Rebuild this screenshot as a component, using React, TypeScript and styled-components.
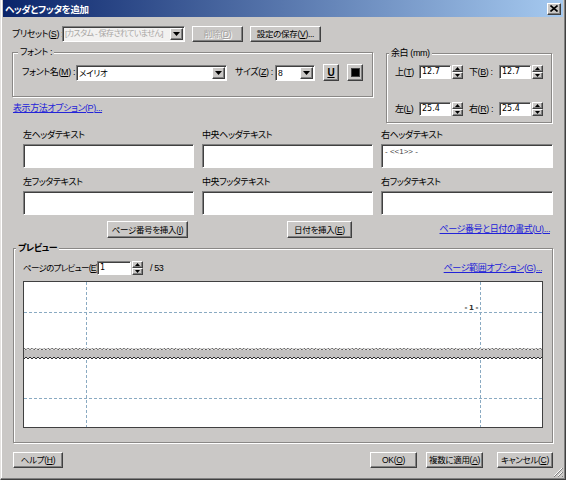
import React from 'react';
import styled, { createGlobalStyle, css } from 'styled-components';

const BG = '#cac8c6';

const GlobalStyle = createGlobalStyle`
  html, body {
    margin: 0;
    padding: 0;
    background: ${BG};
  }
  body {
    font-family: "Liberation Sans", "Noto Sans CJK JP", sans-serif;
    font-size: 9px;
    font-feature-settings: "palt";
    letter-spacing: -0.4px;
    color: #000;
  }
  * { box-sizing: border-box; }
`;

const raised = css`
  background: ${BG};
  border: 1px solid;
  border-color: #fff #404040 #404040 #fff;
  box-shadow: inset -1px -1px 0 #808080;
`;

const sunken = css`
  background: #fff;
  border: 1px solid;
  border-color: #808080 #fff #fff #808080;
  box-shadow: inset 1px 1px 0 #404040;
`;

const Window = styled.div`
  position: relative;
  width: 566px;
  height: 480px;
  overflow: hidden;
  background: ${BG};
  border: 1px solid;
  border-top: none;
  border-color: #e4e2e0 #404040 #404040 #e4e2e0;
  padding: 0 2px 2px 2px;
  box-shadow: inset -1px -1px 0 #808080, inset 1px 0 0 #fff;
`;

const TitleBar = styled.div`
  height: 17px;
  display: flex;
  align-items: center;
  justify-content: space-between;
  padding: 0 2px 0 2px;
  background: linear-gradient(to right, #0a246a, #a6caf0);
  color: #fff;
  font-weight: bold;
  font-size: 9.5px;
`;

const CloseButton = styled.span`
  ${raised};
  width: 14px;
  height: 12px;
  display: flex;
  align-items: center;
  justify-content: center;
`;

const Body = styled.div`
  display: flex;
  flex-direction: column;
  align-items: flex-start;
  padding: 0 11px 0 9px;
`;

const TopArea = styled.div`
  display: flex;
  align-items: flex-start;
  margin-top: 9px;
  height: 97px;
`;

const LeftCol = styled.div`
  width: 361px;
  display: flex;
  flex-direction: column;
`;

const Row = styled.div<{ $h: number; $mt?: number; $pl?: number }>`
  display: flex;
  align-items: center;
  height: ${p => p.$h}px;
  margin-top: ${p => p.$mt ?? 0}px;
  padding-left: ${p => p.$pl ?? 0}px;
  white-space: nowrap;
`;

const Label = styled.span<{ $w?: number; $ml?: number; $tight?: boolean }>`
  display: inline-block;
  flex: none;
  width: ${p => (p.$w ? `${p.$w}px` : 'auto')};
  margin-left: ${p => p.$ml ?? 0}px;
  white-space: nowrap;
  line-height: 13px;
  font-size: ${p => (p.$tight ? 8.5 : 9)}px;
  letter-spacing: ${p => (p.$tight ? -0.7 : -0.4)}px;
`;

const ComboBox = styled.div<{ $w: number; $ml?: number; $disabled?: boolean }>`
  ${sunken};
  flex: none;
  display: flex;
  align-items: center;
  width: ${p => p.$w}px;
  height: 16px;
  padding: 1px 1px 1px 2px;
  margin-left: ${p => p.$ml ?? 0}px;
  background: ${p => (p.$disabled ? '#f2f1f0' : '#fff')};
`;

const ComboText = styled.span<{ $disabled?: boolean }>`
  flex: 1;
  overflow: hidden;
  white-space: nowrap;
  font-size: ${p => (p.$disabled ? 8 : 8.5)}px;
  letter-spacing: ${p => (p.$disabled ? -0.6 : -0.3)}px;
  line-height: 12px;
  color: ${p => (p.$disabled ? '#a8a6a4' : '#000')};
`;

const ComboArrow = styled.span`
  ${raised};
  flex: none;
  width: 13px;
  height: 12px;
  display: flex;
  align-items: center;
  justify-content: center;
`;

const PushButton = styled.button<{ $w: number; $h?: number; $ml?: number }>`
  ${raised};
  flex: none;
  width: ${p => p.$w}px;
  height: ${p => p.$h ?? 16}px;
  margin-left: ${p => p.$ml ?? 0}px;
  padding: 0;
  font: inherit;
  font-size: 8.5px;
  line-height: 12px;
  letter-spacing: -0.3px;
  color: #000;
  white-space: nowrap;
  &:disabled {
    color: #a4a2a0;
    text-shadow: 1px 1px 0 #fff;
  }
`;

const ToolButton = styled.span<{ $ml?: number }>`
  ${raised};
  flex: none;
  width: 16px;
  height: 17px;
  margin-left: ${p => p.$ml ?? 0}px;
  display: flex;
  align-items: center;
  justify-content: center;
  font-weight: bold;
  font-size: 10px;
  letter-spacing: 0;
  text-decoration: underline;
`;

const Swatch = styled.span`
  width: 9px;
  height: 9px;
  background: #000;
  border: 1px solid #404040;
`;

const Group = styled.div<{ $w: number; $h: number; $mt?: number; $ml?: number; $pt: number; $pl: number; $pr?: number }>`
  position: relative;
  flex: none;
  width: ${p => p.$w}px;
  height: ${p => p.$h}px;
  margin-top: ${p => p.$mt ?? 0}px;
  margin-left: ${p => p.$ml ?? 0}px;
  padding: ${p => `${p.$pt}px ${p.$pr ?? 0}px 0 ${p.$pl}px`};
  border: 1px solid #8a8886;
  box-shadow: inset 1px 1px 0 #fff, 1px 1px 0 #fff;
`;

const Legend = styled.span<{ $left: number; $bold?: boolean }>`
  position: absolute;
  top: -7px;
  left: ${p => p.$left}px;
  padding: 0 2px;
  line-height: 13px;
  background: ${BG};
  font-weight: ${p => (p.$bold ? 'bold' : 'normal')};
  white-space: nowrap;
`;

const NumberInput = styled.div<{ $w: number }>`
  ${sunken};
  flex: none;
  width: ${p => p.$w}px;
  height: 14px;
  padding-left: 2px;
  font-family: "DejaVu Sans", sans-serif;
  font-size: 8px;
  letter-spacing: 0;
  line-height: 12px;
`;

const Spin = styled.div`
  flex: none;
  width: 11px;
  height: 14px;
  margin-left: 1px;
  display: flex;
  flex-direction: column;
`;

const SpinHalf = styled.span`
  ${raised};
  flex: 1;
  display: flex;
  align-items: center;
  justify-content: center;
`;

const LinkText = styled.span<{ $mt?: number; $mr?: number }>`
  color: #2323d8;
  text-decoration: underline;
  white-space: nowrap;
  line-height: 13px;
  margin-top: ${p => p.$mt ?? 0}px;
  margin-left: auto;
  margin-right: ${p => p.$mr ?? 0}px;
`;

const TopLink = styled(LinkText)`
  margin-left: 1px;
  align-self: flex-start;
`;

const TextGrid = styled.div`
  display: grid;
  grid-template-columns: 171px 171px 172px;
  column-gap: 8px;
  margin: 6px 0 0 11px;
`;

const FieldLabel = styled.div<{ $mt?: number }>`
  height: 13px;
  line-height: 13px;
  margin-top: ${p => p.$mt ?? 0}px;
  white-space: nowrap;
`;

const TextField = styled.div`
  ${sunken};
  height: 24px;
  margin-top: 2px;
  padding: 2px 3px;
  font-size: 8px;
  letter-spacing: 0;
  line-height: 10px;
  color: #444;
  white-space: pre;
`;

const InsertRow = styled.div`
  display: flex;
  align-items: center;
  width: 540px;
  height: 17px;
  margin-top: 6px;
`;

const PreviewFrame = styled.div`
  width: 520px;
  height: 147px;
  margin-top: 6px;
  border: 1px solid #404040;
  background: #c2c0bf;
`;

const ButtonBar = styled.div`
  display: flex;
  align-items: center;
  width: 541px;
  margin: 9px 0 0 1px;
`;

const Grip = styled.svg`
  position: absolute;
  right: 2px;
  bottom: 2px;
`;

const DownArrow = () => (
  <svg width="7" height="4" viewBox="0 0 7 4"><path d="M0 0h7L3.5 4z" fill="#000" /></svg>
);

const SpinButtons = () => (
  <Spin>
    <SpinHalf><svg width="5" height="3" viewBox="0 0 5 3"><path d="M0 3h5L2.5 0z" fill="#000" /></svg></SpinHalf>
    <SpinHalf><svg width="5" height="3" viewBox="0 0 5 3"><path d="M0 0h5L2.5 3z" fill="#000" /></svg></SpinHalf>
  </Spin>
);

const zig = (from: number, to: number, a: number, b: number) => {
  const pts: string[] = [];
  const step = from < to ? 2 : -2;
  let i = 0;
  for (let x = from; step > 0 ? x <= to : x >= to; x += step) {
    pts.push(`${x},${i % 2 ? b : a}`);
    i++;
  }
  return pts.join(' ');
};

const PreviewDrawing = () => {
  const w = 518;
  const dash = { stroke: '#8aaac2', strokeWidth: 1, strokeDasharray: '3 2' };
  return (
    <svg width={w} height={145} viewBox={`0 0 ${w} 145`} style={{ display: 'block' }}>
      <polygon points={`0,0 ${w},0 ${zig(w, 0, 66, 68)}`} fill="#fff" />
      <polyline points={zig(0, w, 66, 68)} fill="none" stroke="#1a1a1a" strokeWidth="0.9" strokeDasharray="1 1" />
      <polygon points={`${zig(0, w, 77, 75)} ${w},145 0,145`} fill="#fff" />
      <polyline points={zig(0, w, 77, 75)} fill="none" stroke="#1a1a1a" strokeWidth="0.9" />
      <line x1="62.5" y1="0" x2="62.5" y2="66" {...dash} />
      <line x1="456.5" y1="0" x2="456.5" y2="66" {...dash} />
      <line x1="0" y1="30.5" x2={w} y2="30.5" {...dash} />
      <line x1="62.5" y1="78" x2="62.5" y2="145" {...dash} />
      <line x1="456.5" y1="78" x2="456.5" y2="145" {...dash} />
      <line x1="0" y1="116.5" x2={w} y2="116.5" {...dash} />
      <text x="454" y="28" textAnchor="end" fontSize="7" fontWeight="bold" fill="#333" fontFamily="DejaVu Sans, sans-serif">- 1 -</text>
    </svg>
  );
};

export default function App() {
  return (
    <>
      <GlobalStyle />
      <Window>
        <TitleBar>
          <span>ヘッダとフッタを追加</span>
          <CloseButton>
            <svg width="8" height="7" viewBox="0 0 8 7">
              <path d="M0.5 0.5L7.5 6.5M7.5 0.5L0.5 6.5" stroke="#000" strokeWidth="1.6" />
            </svg>
          </CloseButton>
        </TitleBar>
        <Body>
          <TopArea>
            <LeftCol>
              <Row $h={16}>
                <Label $w={50}>プリセット(<u>S</u>) :</Label>
                <ComboBox $w={123} $disabled>
                  <ComboText $disabled>[カスタム - 保存されていません]</ComboText>
                  <ComboArrow><DownArrow /></ComboArrow>
                </ComboBox>
                <PushButton $w={51} $ml={7} disabled>削除(<u>D</u>)</PushButton>
                <PushButton $w={71} $ml={7}>設定の保存(<u>V</u>)...</PushButton>
              </Row>
              <Group $w={361} $h={45} $mt={10} $pt={11} $pl={9}>
                <Legend $left={5}>フォント :</Legend>
                <Row $h={17}>
                  <Label $w={54}>フォント名(<u>M</u>) :</Label>
                  <ComboBox $w={151}>
                    <ComboText>メイリオ</ComboText>
                    <ComboArrow><DownArrow /></ComboArrow>
                  </ComboBox>
                  <Label $w={40} $ml={8}>サイズ(<u>Z</u>) :</Label>
                  <ComboBox $w={40}>
                    <ComboText>8</ComboText>
                    <ComboArrow><DownArrow /></ComboArrow>
                  </ComboBox>
                  <ToolButton $ml={8}>U</ToolButton>
                  <ToolButton $ml={8}><Swatch /></ToolButton>
                </Row>
              </Group>
              <TopLink $mt={5}>表示方法オプション(<u>P</u>)...</TopLink>
            </LeftCol>
            <Group $w={166} $h={70} $mt={27} $ml={13} $pt={11} $pl={8}>
              <Legend $left={2}>余白 (mm)</Legend>
              <Row $h={14}>
                <Label $w={24}>上(<u>T</u>)</Label>
                <NumberInput $w={32}>12.7</NumberInput>
                <SpinButtons />
                <Label $w={30} $ml={6}>下(<u>B</u>) :</Label>
                <NumberInput $w={32}>12.7</NumberInput>
                <SpinButtons />
              </Row>
              <Row $h={14} $mt={23}>
                <Label $w={24}>左(<u>L</u>)</Label>
                <NumberInput $w={32}>25.4</NumberInput>
                <SpinButtons />
                <Label $w={30} $ml={6}>右(<u>R</u>) :</Label>
                <NumberInput $w={32}>25.4</NumberInput>
                <SpinButtons />
              </Row>
            </Group>
          </TopArea>

          <TextGrid>
            <FieldLabel>左ヘッダテキスト</FieldLabel>
            <FieldLabel>中央ヘッダテキスト</FieldLabel>
            <FieldLabel>右ヘッダテキスト</FieldLabel>
            <TextField />
            <TextField />
            <TextField>{'- <<1>> -'}</TextField>
            <FieldLabel $mt={8}>左フッタテキスト</FieldLabel>
            <FieldLabel $mt={8}>中央フッタテキスト</FieldLabel>
            <FieldLabel $mt={8}>右フッタテキスト</FieldLabel>
            <TextField />
            <TextField />
            <TextField />
          </TextGrid>

          <InsertRow>
            <PushButton $w={81} $h={17} $ml={95}>ページ番号を挿入(<u>I</u>)</PushButton>
            <PushButton $w={65} $h={17} $ml={99}>日付を挿入(<u>E</u>)</PushButton>
            <LinkText $mr={2}>ページ番号と日付の書式(<u>U</u>)...</LinkText>
          </InsertRow>

          <Group $w={540} $h={195} $mt={10} $ml={1} $pt={12} $pl={9} $pr={10}>
            <Legend $left={2} $bold>プレビュー</Legend>
            <Row $h={14}>
              <Label $w={74} $tight>ページのプレビュー(<u>E</u>)</Label>
              <NumberInput $w={34}>1</NumberInput>
              <SpinButtons />
              <Label $ml={7}>/ 53</Label>
              <LinkText>ページ範囲オプション(<u>G</u>)...</LinkText>
            </Row>
            <PreviewFrame>
              <PreviewDrawing />
            </PreviewFrame>
          </Group>

          <ButtonBar>
            <PushButton $w={50}>ヘルプ(<u>H</u>)</PushButton>
            <PushButton $w={47} $ml={307}>OK(<u>O</u>)</PushButton>
            <PushButton $w={57} $ml={9}>複数に適用(<u>A</u>)</PushButton>
            <PushButton $w={56} $ml={14}>キャンセル(<u>C</u>)</PushButton>
          </ButtonBar>
        </Body>
        <Grip width="11" height="11" viewBox="0 0 11 11">
          <path d="M10 2L2 10M10 6L6 10" stroke="#fff" strokeWidth="1" />
          <path d="M11 2L2 11M11 6L6 11M11 10L10 11" stroke="#808080" strokeWidth="1" />
        </Grip>
      </Window>
    </>
  );
}
